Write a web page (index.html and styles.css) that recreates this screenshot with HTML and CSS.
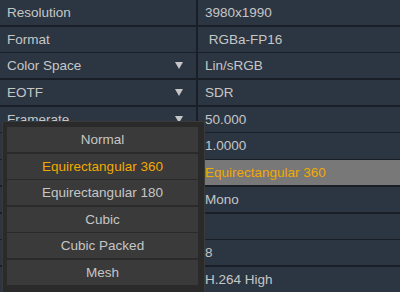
FILE: index.html
```html
<!DOCTYPE html>
<html lang="en">

<head>
  <meta charset="UTF-8">
  <meta name="viewport" content="width=device-width, initial-scale=1.0">
  <title>Stream Properties</title>
  <link rel="stylesheet" href="styles.css">
</head>

<body>
  <div id="props">
    <div class="row"><div class="label">Resolution</div><div class="value">3980x1990</div></div>
    <div class="row"><div class="label">Format</div><div class="value">&nbsp;RGBa-FP16</div></div>
    <div class="row"><div class="label">Color Space<span class="arrow"></span></div><div class="value">Lin/sRGB</div></div>
    <div class="row"><div class="label">EOTF<span class="arrow"></span></div><div class="value">SDR</div></div>
    <div class="row"><div class="label">Framerate<span class="arrow"></span></div><div class="value">50.000</div></div>
    <div class="row"><div class="label"></div><div class="value">1.0000</div></div>
    <div class="row"><div class="label"></div><div class="value selected">Equirectangular 360</div></div>
    <div class="row"><div class="label"></div><div class="value">Mono</div></div>
    <div class="row"><div class="label"></div><div class="value"></div></div>
    <div class="row"><div class="label"></div><div class="value">8</div></div>
    <div class="row"><div class="label"></div><div class="value">H.264 High</div></div>
  </div>

  <div id="popup">
    <div class="item">Normal</div>
    <div class="item active">Equirectangular 360</div>
    <div class="item">Equirectangular 180</div>
    <div class="item">Cubic</div>
    <div class="item">Cubic Packed</div>
    <div class="item">Mesh</div>
  </div>
</body>

</html>
```

FILE: styles.css
```css
body {
  margin: 0;
  width: 400px;
  height: 292px;
  overflow: hidden;
  font-family: 'Liberation Sans', Arial, sans-serif;
  font-size: 13.5px;
  background-color: #1a1f27;
  color: #c6c6c6;
  position: relative;
}

#props {
  height: 292px;
  display: grid;
  grid-template-rows: repeat(11, 1fr);
  row-gap: 1.6px;
}

.row {
  display: flex;
  column-gap: 2px;
}

.label,
.value {
  background-color: #2c3643;
  display: flex;
  align-items: center;
}

.label {
  width: 196px;
  padding: 0 0 0 7px;
  box-sizing: border-box;
  justify-content: space-between;
}

.value {
  flex: 1;
  padding-left: 7px;
}

.value.selected {
  background-color: #787878;
  color: #f2a900;
}

.arrow {
  width: 0;
  height: 0;
  margin-right: 13px;
  border-left: 4.5px solid transparent;
  border-right: 4.5px solid transparent;
  border-top: 7px solid #c6c6c6;
}

#popup {
  position: absolute;
  left: 2px;
  top: 121px;
  width: 203px;
  height: 180px;
  box-sizing: border-box;
  padding: 5px 6px 0 4px;
  background-color: #2a2a2a;
  border: 1px solid #3a3a3a;
  display: flex;
  flex-direction: column;
  row-gap: 1.6px;
}

.item {
  height: 25px;
  display: flex;
  align-items: center;
  justify-content: center;
  background-color: #3a3a3a;
  color: #c6c6c6;
}

.item.active {
  color: #f2a900;
}
```
